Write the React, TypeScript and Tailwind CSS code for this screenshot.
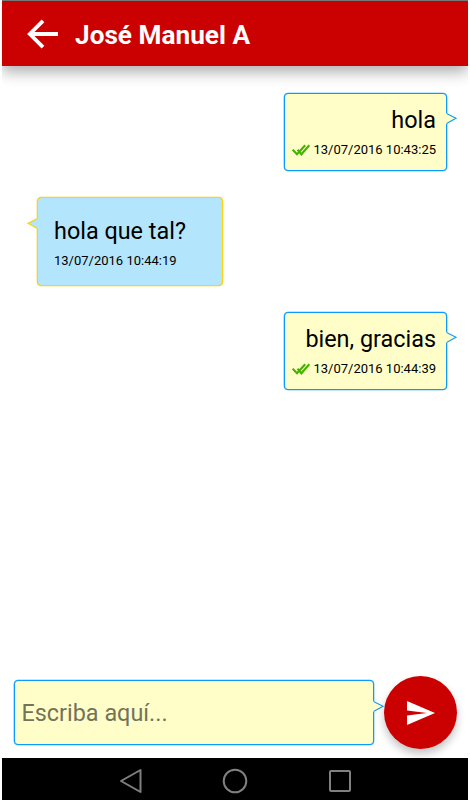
type Message = {
  id: number
  text: string
  time: string
  mine: boolean
}

const messages: Message[] = [
  { id: 1, text: 'hola', time: '13/07/2016 10:43:25', mine: true },
  { id: 2, text: 'hola que tal?', time: '13/07/2016 10:44:19', mine: false },
  { id: 3, text: 'bien, gracias', time: '13/07/2016 10:44:39', mine: true },
]

function DoubleCheck() {
  return (
    <svg width="18" height="12" viewBox="0 0 18 12" fill="none" stroke="#43b300" strokeWidth="2.1">
      <path d="M0.7 5.6L5 10.3L13.2 1.2" />
      <path d="M5.6 5.8L9.4 10.3L17.3 1.2" />
    </svg>
  )
}

function TailRight({ className }: { className: string }) {
  return (
    <svg className={`absolute ${className}`} width="12" height="11" viewBox="0 0 12 11">
      <path d="M0 0.5H1.5L10 5.2L1.5 10.5H0Z" fill="#fffec8" />
      <path d="M1 0.7L10 5.2L1 10.3" fill="none" stroke="#0a9bff" strokeWidth="1.1" />
    </svg>
  )
}

function TailLeft({ className }: { className: string }) {
  return (
    <svg className={`absolute ${className}`} width="12" height="11" viewBox="0 0 12 11">
      <path d="M12 0.5H10.5L2 5.2L10.5 10.5H12Z" fill="#b3e5fc" />
      <path d="M11 0.7L2 5.2L11 10.3" fill="none" stroke="#ffd20a" strokeWidth="1.2" />
    </svg>
  )
}

function Bubble({ message }: { message: Message }) {
  if (message.mine) {
    return (
      <div className="relative mr-[21px] h-[78px] w-[163px] self-end rounded-[4px] border border-[#0a9bff] bg-[#fffec8] pt-[11px] pr-[10px] text-right shadow-[0_0_0_0.3px_#0a9bff]">
        <p className="text-[23.4px] leading-[30px] text-black">{message.text}</p>
        <div className="mt-[6px] flex items-center justify-end gap-[3px]">
          <DoubleCheck />
          <span className="text-[13px] leading-[18px] text-black">{message.time}</span>
        </div>
        <TailRight className="top-[19px] -right-[12px]" />
      </div>
    )
  }

  return (
    <div className="relative ml-[35px] h-[89px] w-[186px] self-start rounded-[4px] border border-[#ffd20a] bg-[#b3e5fc] pt-[18px] pl-[16px] shadow-[0_0_0_0.3px_#ffd20a]">
      <p className="text-[23.4px] leading-[30px] text-black">{message.text}</p>
      <p className="mt-[6px] text-[13px] leading-[18px] text-black">{message.time}</p>
      <TailLeft className="top-[20px] -left-[12px]" />
    </div>
  )
}

export default function App() {
  return (
    <div className="h-[800px] w-[470px] overflow-hidden bg-white pr-[2px] pl-[2px] font-[Roboto,sans-serif]">
      <div className="flex h-full flex-col overflow-hidden">
        {/* Cabecera */}
        <header className="flex h-[66px] shrink-0 items-center border-t border-[#777777] bg-[#cb0000] pl-[25px] shadow-[0_6px_14px_rgba(0,0,0,0.32)]">
          <svg width="32" height="30" viewBox="0 0 32 30" fill="none" stroke="white" strokeWidth="3.8">
            <path d="M16 1.8L2.8 15L16 28.2M2.8 15H31" />
          </svg>
          <h1 className="ml-[16px] pt-[3px] text-[26.2px] leading-[32px] font-bold text-white">José Manuel A</h1>
        </header>

        {/* Mensajes */}
        <main className="flex flex-1 flex-col gap-[26px] pt-[27px]">
          {messages.map((message) => (
            <Bubble key={message.id} message={message} />
          ))}
        </main>

        {/* Entrada de texto */}
        <div className="flex h-[83px] shrink-0 items-start pl-[12px]">
          <div className="relative mt-[5px] flex h-[65px] w-[360px] items-center rounded-[4px] border border-[#0a9bff] bg-[#fffec8] shadow-[0_0_0_0.3px_#0a9bff]">
            <input
              className="w-full bg-transparent pt-[3px] pl-[6.5px] text-[23.4px] text-[#73735a] outline-none placeholder:text-[#73735a]"
              placeholder="Escriba aquí..."
            />
            <TailRight className="top-[20px] -right-[12px]" />
          </div>
          <button className="mt-[1px] ml-[10px] flex h-[73px] w-[73px] items-center justify-center rounded-full bg-[#cb0000] pl-[1px] shadow-[0_5px_9px_rgba(0,0,0,0.24)]">
            <svg width="28" height="24" viewBox="0 0 28 24" fill="white">
              <path d="M0 0L28 12L0 24V14.4L20 12L0 9.6Z" />
            </svg>
          </button>
        </div>

        {/* Barra de navegación */}
        <nav className="relative flex h-[42px] shrink-0 items-center bg-black pt-[4px] pl-[117px]">
          <svg width="24" height="26" viewBox="0 0 24 26" fill="none" stroke="#808080" strokeWidth="2" strokeLinejoin="round">
            <path d="M21.5 2V24L2 13Z" />
          </svg>
          <svg className="ml-[79px]" width="26" height="26" viewBox="0 0 26 26" fill="none" stroke="#808080" strokeWidth="2">
            <circle cx="13" cy="13" r="11.3" />
          </svg>
          <svg className="ml-[80px]" width="24" height="24" viewBox="0 0 24 24" fill="none" stroke="#808080" strokeWidth="2">
            <rect x="2" y="2" width="20" height="20" rx="1" />
          </svg>
        </nav>
      </div>
    </div>
  )
}
